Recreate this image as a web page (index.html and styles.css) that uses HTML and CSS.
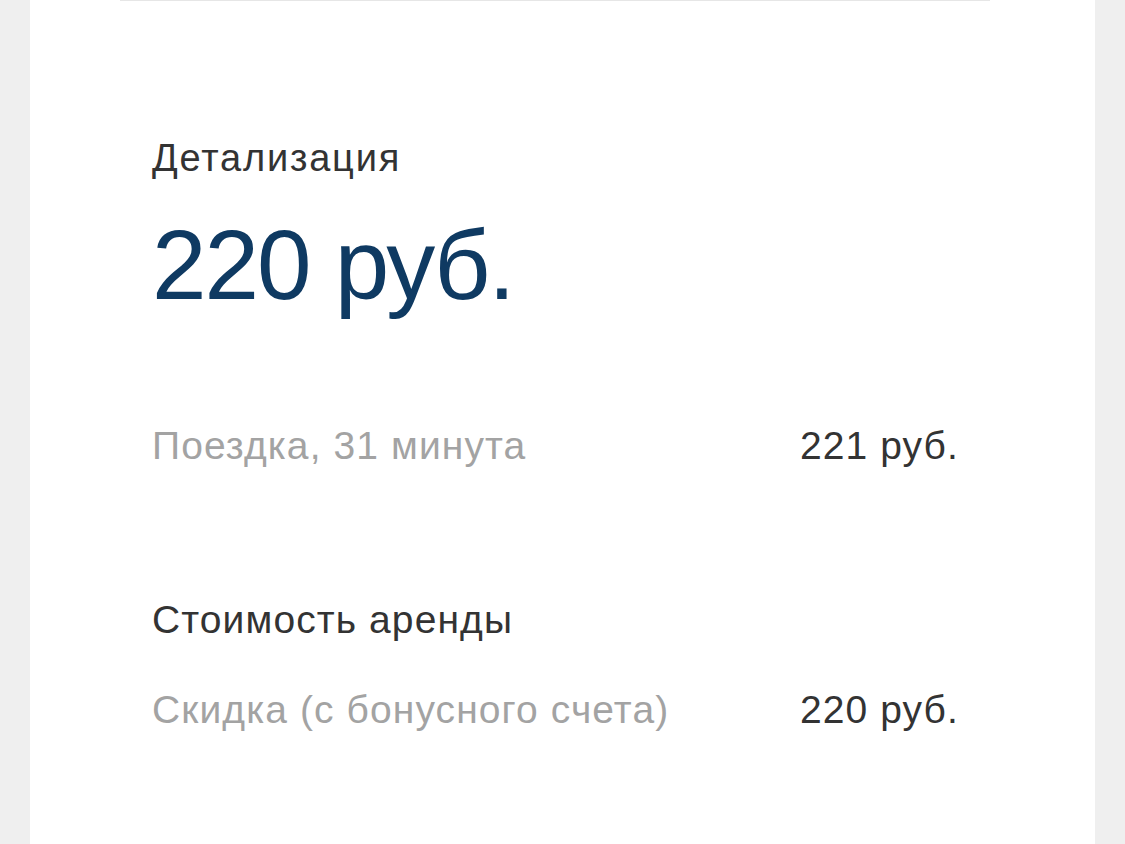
FILE: index.html
```html
<!DOCTYPE html>
<html lang="ru">
<head>
<meta charset="utf-8">
<link rel="stylesheet" href="styles.css">
</head>
<body>
<div class="card">
  <div class="topline"></div>
  <div class="content">
    <div class="title">Детализация</div>
    <div class="total">220 руб.</div>
    <div class="row row-first">
      <span class="label">Поездка, 31 минута</span>
      <span class="value">221 руб.</span>
    </div>
    <div class="section">Стоимость аренды</div>
    <div class="row row-second">
      <span class="label">Скидка (с бонусного счета)</span>
      <span class="value">220 руб.</span>
    </div>
  </div>
</div>
</body>
</html>
```
FILE: styles.css
```css
html, body {
  margin: 0;
  padding: 0;
  background: #efefef;
  height: 100%;
}
body {
  font-family: "Liberation Sans", Arial, sans-serif;
  overflow: hidden;
}
.card {
  margin: 0 30px;
  background: #ffffff;
  min-height: 100%;
  box-sizing: border-box;
}
.topline {
  margin: 0 105px 0 90px;
  border-top: 1px solid #e6e6e6;
}
.content {
  padding: 134px 136px 0 122px;
}
.title {
  font-size: 38px;
  line-height: 46px;
  letter-spacing: 1.8px;
  color: #333333;
}
.total {
  margin-top: 29px;
  font-size: 98px;
  line-height: 110px;
  letter-spacing: -2px;
  color: #0f3a62;
}
.row {
  display: flex;
  justify-content: space-between;
  font-size: 39px;
  line-height: 46px;
  letter-spacing: 1.1px;
}
.row-first {
  margin-top: 103px;
}
.row-second {
  margin-top: 44px;
}
.label {
  color: #a3a3a3;
}
.value {
  color: #333333;
}
.section {
  margin-top: 128px;
  font-size: 39px;
  line-height: 46px;
  letter-spacing: 1.1px;
  color: #333333;
}
```
